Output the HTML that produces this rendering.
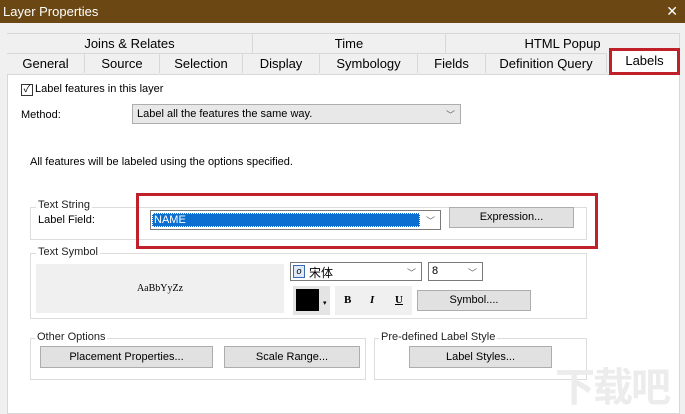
<!DOCTYPE html><html><head><meta charset="utf-8"><style>
*{box-sizing:border-box;margin:0;padding:0}
body{width:685px;height:411px;overflow:hidden;background:#f0f0f0;font-family:"Liberation Sans","Noto Sans CJK SC",sans-serif;font-size:11px;color:#000;position:relative}
.a{position:absolute}
.title{left:0;top:0;width:685px;height:23px;background:#6b4714;color:#fff;font-size:13px;line-height:23px;padding-left:3px}
.tab{position:absolute;height:20px;border-right:1px solid #d8d8d8;border-top:1px solid #d8d8d8;text-align:center;font-size:13px;line-height:20px;background:#f0f0f0}
.panel{left:7px;top:74px;width:673px;height:340px;background:#fff;border:1px solid #d8d8d8}
.grp{position:absolute;border:1px solid #dcdcdc}
.gt{position:absolute;background:#fff;padding:0 2px;font-size:11px;color:#222;line-height:13px}
.btn{position:absolute;background:#e1e1e1;border:1px solid #adadad;text-align:center;font-size:11px}
.sel{position:absolute;border:1px solid #7a7a7a;background:#fff}
.chev{position:absolute;right:5px;top:0;color:#666;font-size:9px}
</style></head><body>
<div class="a title">Layer Properties<span style="position:absolute;right:7px;top:0;font-size:14px">✕</span></div>
<div class="tab" style="left:7px;top:33px;width:246px">Joins &amp; Relates</div>
<div class="tab" style="left:253px;top:33px;width:193px">Time</div>
<div class="tab" style="left:446px;top:33px;width:234px">HTML Popup</div>
<div class="tab" style="left:7px;top:53px;width:78px">General</div>
<div class="tab" style="left:85px;top:53px;width:75px">Source</div>
<div class="tab" style="left:160px;top:53px;width:83px">Selection</div>
<div class="tab" style="left:243px;top:53px;width:77px">Display</div>
<div class="tab" style="left:320px;top:53px;width:98px">Symbology</div>
<div class="tab" style="left:418px;top:53px;width:68px">Fields</div>
<div class="tab" style="left:486px;top:53px;width:121px">Definition Query</div>
<div class="a panel"></div>
<div class="tab" style="left:609px;top:48px;width:71px;height:27px;background:#fff;border:3px solid #c0202a;line-height:20px">Labels</div>
<div class="a" style="left:21px;top:84px;width:12px;height:12px;border:1px solid #333;font-size:10px;line-height:10px;text-align:center">✓</div>
<div class="a" style="left:35px;top:83px">Label features in this layer</div>
<div class="a" style="left:21px;top:109px">Method:</div>
<div class="sel" style="left:132px;top:104px;width:329px;height:20px;background:#e8e8e8;border-color:#adadad;padding:3px 0 0 4px">Label all the features the same way.<span class="chev" style="top:3px">﹀</span></div>
<div class="a" style="left:30px;top:156px">All features will be labeled using the options specified.</div>
<div class="grp" style="left:30px;top:207px;width:557px;height:33px"></div>
<div class="gt" style="left:36px;top:199px">Text String</div>
<div class="a" style="left:38px;top:214px">Label Field:</div>
<div class="sel" style="left:150px;top:210px;width:291px;height:20px"><div style="position:absolute;left:1px;top:2px;width:268px;height:14px;background:#0a6fd0;color:#fff;border:1px dotted #fff;font-size:11px;padding-left:1px">NAME</div><span class="chev" style="top:3px">﹀</span></div>
<div class="btn" style="left:449px;top:207px;width:125px;height:21px;line-height:19px">Expression...</div>
<div class="a" style="left:136px;top:193px;width:462px;height:56px;border:3px solid #c0202a"></div>
<div class="grp" style="left:30px;top:253px;width:557px;height:66px"></div>
<div class="gt" style="left:36px;top:246px">Text Symbol</div>
<div class="a" style="left:36px;top:264px;width:248px;height:49px;background:#f0f0f0;text-align:center;line-height:49px;font-family:'Liberation Serif',serif;font-size:10px">AaBbYyZz</div>
<div class="sel" style="left:290px;top:262px;width:132px;height:19px;padding:1px 0 0 18px;font-size:12px"><span style="position:absolute;left:2px;top:2px;width:12px;height:13px;border:1px solid #3a6ab0;background:#dfe9f7;font-size:9px;line-height:11px;text-align:center;font-style:italic">o</span>宋体<span class="chev" style="top:3px">﹀</span></div>
<div class="sel" style="left:428px;top:262px;width:55px;height:19px;padding:2px 0 0 3px">8<span class="chev" style="top:3px">﹀</span></div>
<div class="a" style="left:293px;top:286px;width:37px;height:29px;background:#e4e4e4"><div style="position:absolute;left:3px;top:3px;width:23px;height:22px;background:#000"></div><div style="position:absolute;left:30px;top:13px;font-size:7px">▾</div></div>
<div class="a" style="left:335px;top:286px;width:77px;height:29px;background:#f0f0f0;font-family:'Liberation Serif',serif;font-size:11px;font-weight:bold;line-height:29px"><span style="position:absolute;left:9px">B</span><span style="position:absolute;left:35px;font-style:italic">I</span><span style="position:absolute;left:60px;text-decoration:underline">U</span></div>
<div class="btn" style="left:417px;top:290px;width:114px;height:21px;line-height:19px">Symbol....</div>
<div class="grp" style="left:30px;top:338px;width:336px;height:42px"></div>
<div class="gt" style="left:35px;top:331px">Other Options</div>
<div class="btn" style="left:40px;top:346px;width:173px;height:22px;line-height:20px">Placement Properties...</div>
<div class="btn" style="left:224px;top:346px;width:136px;height:22px;line-height:20px">Scale Range...</div>
<div class="grp" style="left:374px;top:338px;width:213px;height:42px"></div>
<div class="gt" style="left:379px;top:331px">Pre-defined Label Style</div>
<div class="btn" style="left:409px;top:346px;width:143px;height:22px;line-height:20px">Label Styles...</div>
<div class="a" style="left:555px;top:355px;font-size:40px;color:#ececec;font-weight:bold;letter-spacing:-2px">下载吧</div>
</body></html>
